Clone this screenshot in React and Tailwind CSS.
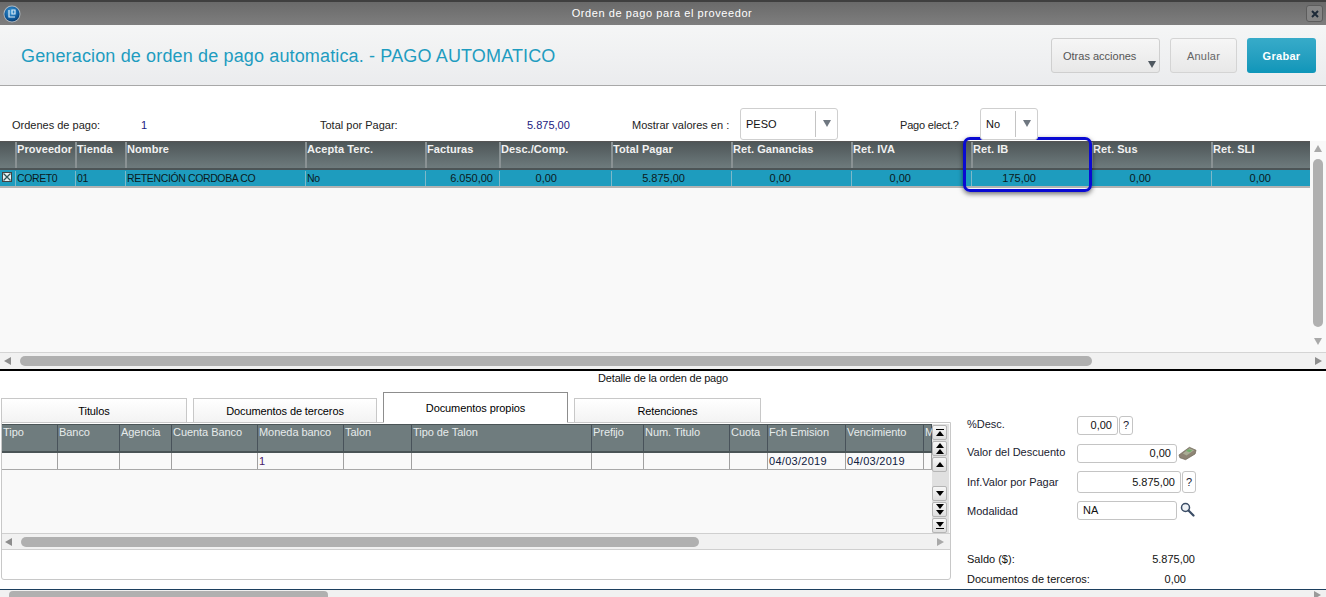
const font = "font-['Liberation_Sans',Arial,sans-serif]";

const Tri = ({ dir = "up", c = "#8b8f92", s = 8 }) => {
  const pts = { up: "0,7 4,0 8,7", down: "0,0 4,7 8,0", left: "7,0 0,4 7,8", right: "0,0 7,4 0,8" }[dir];
  return <svg width={s} height={s} viewBox="0 0 8 8" className="shrink-0"><polygon points={pts} fill={c} /></svg>;
};

const topCols = [
  ["", 16, 0], ["Proveedor", 60, 0], ["Tienda", 50, 0], ["Nombre", 180, 0], ["Acepta Terc.", 120, 0],
  ["Facturas", 74, 6], ["Desc./Comp.", 112, 54], ["Total Pagar", 120, 46], ["Ret. Ganancias", 120, 60],
  ["Ret. IVA", 120, 60], ["Ret. IB", 120, 55], ["Ret. Sus", 120, 60], ["Ret. SLI", 120, 60],
];
const headW = [17, 60, 50, 180, 120, 74, 112, 120, 120, 120, 120, 120, 119];
const topVals = ["", "CORET0", "01", "RETENCIÓN CORDOBA CO", "No", "6.050,00", "0,00", "5.875,00", "0,00", "0,00", "175,00", "0,00", "0,00"];

const lowCols = [
  ["Tipo", 56], ["Banco", 62], ["Agencia", 52], ["Cuenta Banco", 86], ["Moneda banco", 86], ["Talon", 68],
  ["Tipo de Talon", 180], ["Prefijo", 52], ["Num. Titulo", 86], ["Cuota", 38], ["Fch Emision", 78], ["Vencimiento", 78], ["M", 8],
];
const lowVals = ["", "", "", "", "1", "", "", "", "", "", "04/03/2019", "04/03/2019", ""];

const Tab = ({ label, w, active }) => (
  <div
    style={{ width: w }}
    className={
      active
        ? "h-[31px] -mb-px z-10 relative bg-white border border-[#8d8d8d] border-b-white flex items-center justify-center pt-[1px] text-[11px] tracking-[-0.08px] text-black"
        : "h-[24px] bg-gradient-to-b from-white to-[#f3f3f3] border border-b-0 border-[#c8c8c8] flex items-center justify-center pt-[1px] text-[11px] tracking-[-0.1px] text-black"
    }
  >
    {label}
  </div>
);

const Stack = ({ kind }) => {
  const bar = <div className="w-[8px] h-[1.5px] bg-black" />;
  const up = <div className="w-0 h-0 border-x-[4px] border-x-transparent border-b-[5px] border-b-black" />;
  const down = <div className="w-0 h-0 border-x-[4px] border-x-transparent border-t-[5px] border-t-black" />;
  return (
    <div className="w-[15px] h-[15px] rounded-[2px] border border-[#b5b5b5] bg-gradient-to-b from-[#f7f7f7] to-[#dedede] flex flex-col items-center justify-center gap-[1px]">
      {kind === "top" && <>{bar}{up}</>}
      {kind === "dup" && <>{up}{up}</>}
      {kind === "up" && up}
      {kind === "down" && down}
      {kind === "ddown" && <>{down}{down}</>}
      {kind === "bottom" && <>{down}{bar}</>}
    </div>
  );
};

const Field = ({ w, h = 19, children, left }) => (
  <div
    style={{ width: w, height: h }}
    className={`bg-white border border-[#c4c4c4] rounded-[3px] flex items-center text-[11px] text-[#111] ${left ? "justify-start pl-[5px]" : "justify-end pr-[5px]"}`}
  >
    {children}
  </div>
);

const Q = ({ h = 19 }) => (
  <div style={{ height: h }} className="w-[14px] ml-[1px] bg-white border border-[#c4c4c4] rounded-[3px] flex items-center justify-center text-[11px] text-[#223]">?</div>
);

const Select = ({ w, sep, v }) => (
  <div style={{ width: w }} className="h-[32px] bg-white border border-[#cfcfcf] rounded-[3px] flex items-center relative -mb-[2px]">
    <span className="pl-[5px] text-[11px] text-[#111]" style={{ width: sep }}>{v}</span>
    <div className="w-px h-[26px] bg-[#c4c4c4]" />
    <div className="flex-1 flex justify-center -mt-[1px]"><Tri dir="down" c="#6f7780" /></div>
  </div>
);

export default function App() {
  return (
    <div className={`${font} w-[1326px] h-[597px] overflow-hidden bg-white relative flex flex-col`}>
      {/* title bar */}
      <div className="h-[25px] shrink-0 border-t-2 border-[#3f3f3f] bg-gradient-to-b from-[#6a6a6a] to-[#7e7e7e] flex items-center pl-[3px] pr-[3px]">
        <svg width="18" height="18" viewBox="0 0 18 18" className="shrink-0">
          <defs>
            <radialGradient id="g" cx="45%" cy="35%" r="65%">
              <stop offset="0%" stopColor="#3f9bd8" />
              <stop offset="70%" stopColor="#0f5c9e" />
              <stop offset="100%" stopColor="#0a3d70" />
            </radialGradient>
          </defs>
          <circle cx="9" cy="9" r="8.5" fill="#aeb8c0" />
          <circle cx="9" cy="9" r="7.6" fill="url(#g)" />
          <path d="M6 5v7h6M9 5h3v4H9z" stroke="#d9eaf6" strokeWidth="1.2" fill="none" />
        </svg>
        <div className="flex-1 text-center text-[11px] font-normal tracking-[0.58px] text-white pr-[3px]">Orden de pago para el proveedor</div>
        <div className="w-[17px] h-[17px] rounded-[3px] border border-[#5c5c5c] bg-[#858585] flex items-center justify-center">
          <svg width="8" height="8" viewBox="0 0 8 8"><path d="M1 1l6 6M7 1l-6 6" stroke="#1d2a38" strokeWidth="2" /></svg>
        </div>
      </div>

      {/* page header */}
      <div className="h-[61px] shrink-0 bg-gradient-to-b from-[#f5f6f6] to-[#ebecee] border-b border-[#a8a8a8] flex items-center pl-[21px] pr-[10px]">
        <h1 className="flex-1 text-[18px] font-normal tracking-[0.145px] text-[#1e9cc0] mt-[2px]">Generacion de orden de pago automatica. - PAGO AUTOMATICO</h1>
        <div className="w-[109px] h-[35px] mr-[10px] relative rounded-[3px] border border-[#cfcfcf] bg-gradient-to-b from-[#f6f6f6] to-[#e8e8e8] flex items-center pl-[11px] pt-[2px] text-[11px] text-[#555]">
          Otras acciones
          <div className="absolute right-[3px] bottom-[3px]"><Tri dir="down" c="#4f5860" /></div>
        </div>
        <div className="w-[67px] h-[35px] mr-[10px] rounded-[3px] border border-[#d4d4d4] bg-gradient-to-b from-[#f6f6f6] to-[#e8e8e8] flex items-center justify-center pt-[2px] text-[11px] tracking-[0.2px] text-[#666]">Anular</div>
        <div className="w-[69px] h-[35px] rounded-[3px] bg-gradient-to-b from-[#37abc9] to-[#0e96b9] flex items-center justify-center pt-[2px] text-[11px] font-bold tracking-[0.3px] text-white">Grabar</div>
      </div>

      {/* filters */}
      <div className="h-[55px] shrink-0 flex items-end text-[11px] text-[#222] relative z-10">
        <div className="flex items-end h-[32px] pb-[3px] w-full">
          <span className="w-[128px] pl-[12px] pb-[5px]">Ordenes de pago:</span>
          <span className="w-[192px] pl-[13px] pb-[5px] text-[#1c1a80]">1</span>
          <span className="w-[207px] pb-[5px]">Total por Pagar:</span>
          <span className="w-[105px] pb-[5px] text-[#1c1a80]">5.875,00</span>
          <span className="w-[108px] pb-[5px]">Mostrar valores en :</span>
          <Select w={98} sep={74} v="PESO" />
          <span className="w-[62px] ml-[62px] pb-[5px] whitespace-nowrap tracking-[-0.2px]">Pago elect.?</span>
          <div className="ml-[18px]"><Select w={58} sep={34} v="No" /></div>
        </div>
      </div>

      {/* top grid */}
      <div className="h-[228px] shrink-0 flex flex-col bg-[#f9f9f9] relative">
        <div className="flex-1 flex min-h-0">
          <div className="w-[1310px] overflow-hidden shrink-0">
            <div className="flex h-[29px] border-b-2 border-[#4c5456] border-t border-t-[#555] bg-gradient-to-b from-[#4e5658] to-[#6e7b7d] w-[1332px]">
              {topCols.map(([l], i) => (
                <div key={l + i} style={{ width: headW[i] }} className="shrink-0 border-r-2 border-r-[#8a9294] text-[11px] leading-[14px] font-bold tracking-[0.07px] text-[#f1f1f1] whitespace-nowrap overflow-hidden">{l}</div>
              ))}
            </div>
            <div className="flex h-[18px] pt-[1px] border-b-2 border-b-[#b3b3b3] bg-[#1e9cbe] w-[1332px]">
              {topCols.map(([l, w, pr], i) => (
                <div key={l + i} style={{ width: w, paddingRight: pr }} className={`shrink-0 border-r border-r-[#7db8c9] text-[#0b1a20] whitespace-nowrap overflow-hidden flex items-center ${i > 4 ? "justify-end text-[11px]" : "pl-[1px] text-[10.5px] tracking-[-0.38px]"}`}>
                  {i === 0 ? (
                    <div className="w-[10px] h-[10px] -mt-[3px] ml-[1px] border border-[#444] bg-[#e8f0f2] flex items-center justify-center">
                      <svg width="8" height="8" viewBox="0 0 8 8"><path d="M0.5 0.5l7 7M7.5 0.5l-7 7" stroke="#2f5558" strokeWidth="1.3" /></svg>
                    </div>
                  ) : topVals[i]}
                </div>
              ))}
            </div>
          </div>
          <div className="w-[16px] shrink-0 flex flex-col items-center pt-[4px]">
            <Tri dir="up" c="#a9a9a9" />
            <div className="w-[10px] h-[168px] mt-[6px] rounded-[5px] bg-[#b0b0b0]" />
            <div className="flex-1" />
            <div className="mb-[6px]"><Tri dir="down" c="#a9a9a9" /></div>
          </div>
        </div>
        <div className="h-[17px] shrink-0 border-t border-[#d4d4d4] bg-[#f1f1f1] flex items-center pl-[4px]">
          <Tri dir="left" c="#8d8d8d" />
          <div className="w-[1072px] h-[10px] ml-[8px] rounded-[5px] bg-[#b0b0b0]" />
          <div className="flex-1" />
          <div className="mr-[3px]"><Tri dir="right" c="#8d8d8d" /></div>
        </div>
        {/* highlight */}
        <div className="absolute left-[963px] top-[-4px] w-[129px] h-[55px] rounded-[7px] border-[3px] border-[#0a0ad2] shadow-[0_2px_5px_rgba(0,0,0,0.55)]" />
      </div>

      <div className="h-[2px] shrink-0 bg-black" />

      {/* detail */}
      <div className="flex-1 min-h-0 flex flex-col">
        <div className="h-[14px] shrink-0 text-center text-[11px] tracking-[-0.2px] text-[#111] leading-[14px]">Detalle de la orden de pago</div>
        <div className="flex-1 flex min-h-0">
          <div className="w-[952px] shrink-0 pl-[1px] flex flex-col">
            <div className="h-[37px] shrink-0 flex items-end gap-[6px] relative">
              <Tab label="Titulos" w={186} />
              <Tab label="Documentos de terceros" w={184} />
              <Tab label="Documentos propios" w={185} active />
              <Tab label="Retenciones" w={187} />
            </div>
            <div className="h-[158px] shrink-0 w-[950px] border border-[#c8c8c8] rounded-b-[3px] pt-[1px] flex flex-col bg-white">
              <div className="h-[109px] shrink-0 flex bg-[#f9f9f9]">
                <div className="w-[930px] shrink-0 overflow-hidden">
                  <div className="flex h-[29px] border-y border-y-[#4a5456] border-b-2 bg-[#6f7c7e]">
                    {lowCols.map(([l, w]) => (
                      <div key={l} style={{ width: w }} className="shrink-0 border-r border-r-[#48525a] pl-[1px] text-[11px] tracking-[-0.05px] text-[#e6ebeb] whitespace-nowrap leading-[14px]">{l}</div>
                    ))}
                  </div>
                  <div className="flex h-[17px] border-b border-b-[#a8a8a8] bg-[#f9f9f9]">
                    {lowCols.map(([l, w], i) => (
                      <div key={l} style={{ width: w }} className={`shrink-0 border-r border-r-[#a0a0a0] pl-[1px] text-[11px] tracking-[0.28px] whitespace-nowrap overflow-hidden leading-[17px] ${i === 4 ? "text-[#4a1a6a]" : "text-[#102040]"}`}>{lowVals[i]}</div>
                    ))}
                  </div>
                </div>
                <div className="w-[17px] shrink-0 bg-[#e0e0e0] flex flex-col pt-[1px]">
                  <Stack kind="top" />
                  <div className="h-[1px]" />
                  <Stack kind="dup" />
                  <div className="h-[1px]" />
                  <Stack kind="up" />
                  <div className="flex-1" />
                  <Stack kind="down" />
                  <div className="h-[1px]" />
                  <Stack kind="ddown" />
                  <div className="h-[1px]" />
                  <Stack kind="bottom" />
                </div>
              </div>
              <div className="h-[17px] shrink-0 border-y border-[#cfcfcf] bg-[#f1f1f1] flex items-center pl-[3px]">
                <Tri dir="left" c="#8d8d8d" />
                <div className="w-[678px] h-[10px] ml-[8px] rounded-[5px] bg-[#b0b0b0]" />
                <div className="flex-1" />
                <div className="mr-[5px]"><Tri dir="right" c="#a9a9a9" /></div>
              </div>
            </div>
          </div>

          {/* form */}
          <div className="flex-1 pl-[15px] pt-[31px] text-[11px] text-[#1a2230] flex flex-col">
            <div className="flex items-center h-[19px]">
              <span className="w-[110px] -mt-[2px]">%Desc.</span>
              <Field w={41}>0,00</Field>
              <Q />
            </div>
            <div className="flex items-center h-[19px] mt-[9px]">
              <span className="w-[110px] -mt-[2px]">Valor del Descuento</span>
              <Field w={100}>0,00</Field>
              <svg width="19" height="15" viewBox="0 0 20 15" className="ml-[1px]">
                <path d="M1 9L12 1l7 3-1 4-10 6-6-2z" fill="#8d8474" stroke="#6b6355" strokeWidth="0.7" />
                <path d="M5 7.5l7-5.5 5 2.2-8 5.3z" fill="#a9ad94" />
                <path d="M11 3l4 1.4-2.5 1.8-4-1.3z" fill="#6fae6a" />
              </svg>
            </div>
            <div className="flex items-center h-[22px] mt-[8px]">
              <span className="w-[110px]">Inf.Valor por Pagar</span>
              <Field w={104} h={22}>5.875,00</Field>
              <Q h={22} />
            </div>
            <div className="flex items-center h-[19px] mt-[8px]">
              <span className="w-[110px] mt-[1px]">Modalidad</span>
              <Field w={100} left>NA</Field>
              <svg width="15" height="15" viewBox="0 0 15 15" className="ml-[3px] -mt-[2px]">
                <circle cx="5.5" cy="5.5" r="4" fill="#eef2f6" stroke="#3b4d66" strokeWidth="1.5" />
                <path d="M8.5 8.5L13.5 13.5" stroke="#3b4d66" strokeWidth="2.2" strokeLinecap="round" />
              </svg>
            </div>
            <div className="flex w-[228px] justify-between mt-[31px] text-[#111]">
              <span>Saldo ($):</span>
              <span>5.875,00</span>
            </div>
            <div className="flex w-[219px] justify-between mt-[3px] text-[#111]">
              <span>Documentos de terceros:</span>
              <span>0,00</span>
            </div>
          </div>
        </div>
      </div>

      {/* bottom scrollbar */}
      <div className="h-[8px] shrink-0 border-t border-[#1c3f5e] bg-[#f1f1f1] flex items-start pl-[9px] pt-[1px]">
        <div className="w-[319px] h-[8px] rounded-t-[4px] bg-[#b0b0b0]" />
        <div className="flex-1" />
        <div className="mr-[4px]"><Tri dir="right" c="#9a9a9a" /></div>
      </div>
    </div>
  );
}
